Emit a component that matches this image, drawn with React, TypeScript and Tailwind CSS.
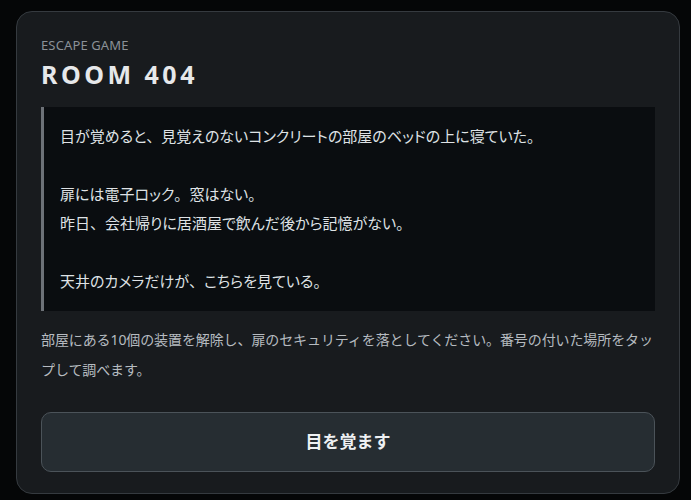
const story = [
  '目が覚めると、見覚えのないコンクリートの部屋のベッドの上に寝ていた。',
  '',
  '扉には電子ロック。窓はない。',
  '昨日、会社帰りに居酒屋で飲んだ後から記憶がない。',
  '',
  '天井のカメラだけが、こちらを見ている。',
];

// palt narrows the kana; keep the full-width 、。 as they are
function Line({ text }: { text: string }) {
  const parts = text.split(/([、。])/);
  return (
    <>
      {parts.map((part, i) =>
        part === '、' || part === '。' ? (
          <span key={i} className="[font-feature-settings:normal]">
            {part}
          </span>
        ) : (
          part
        ),
      )}
    </>
  );
}

export default function App() {
  return (
    <div className="h-[500px] w-full overflow-hidden bg-[#050607] pt-[11px] font-['Noto_Sans','Noto_Sans_CJK_JP',sans-serif]">
      <div className="ml-4 w-[664px] rounded-2xl border border-[#353a3f] bg-[#181b1e] px-6 pt-[25px] pb-[21px]">
        <div className="text-[13px] leading-4 tracking-[0.01em] text-[#8b9197]">
          ESCAPE GAME
        </div>
        <h1 className="mt-[5px] text-[25px] leading-8 font-bold tracking-[0.14em] text-[#e6e8ea]">
          ROOM 404
        </h1>

        <div className="mt-[17px] border-l-[3px] border-[#6d7278] bg-[#0a0d10] py-[15px] pl-4 pr-4 text-[15px] leading-[29px] text-[#dfe2e5] [font-feature-settings:'palt']">
          {story.map((line, i) => (
            <p key={i} className="h-[29px]">
              <Line text={line} />
            </p>
          ))}
        </div>

        <p className="mt-[14px] text-[14px] leading-[30px] tracking-[-0.1px] text-[#b6bbc0]">
          部屋にある10個の装置を解除し、扉のセキュリティを落としてください。番号の付いた場所をタップして調べます。
        </p>

        <button
          type="button"
          className="mt-[27px] flex h-[60px] w-full items-center justify-center rounded-[10px] border border-[#4b5359] bg-[#262d32] text-[17px] font-bold text-[#eef0f2]"
        >
          目を覚ます
        </button>
      </div>
    </div>
  );
}
